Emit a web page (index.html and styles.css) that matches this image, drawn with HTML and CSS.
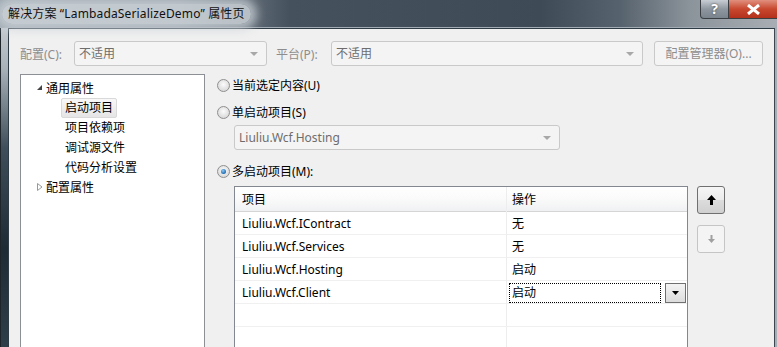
FILE: index.html
```html
<!DOCTYPE html>
<html lang="zh-CN">
<head>
  <meta charset="UTF-8">
  <title>解决方案 属性页</title>
  <link rel="stylesheet" href="styles.css">
</head>
<body>
  <div class="window">
    <div class="titlebar">
      <span class="title-glow">解决方案 “LambadaSerializeDemo” 属性页</span>
      <div class="caption-btns">
        <div class="cap-help">?</div>
        <div class="cap-close">
          <svg width="15" height="11" viewBox="0 0 15 11"><path d="M2 1 L13 10 M13 1 L2 10" stroke="#fff" stroke-width="3"/></svg>
        </div>
      </div>
    </div>

    <div class="frame">
      <div class="frame-left"></div>
      <div class="client">
        <div class="toolbar">
          <span class="lbl lbl-config">配置(C):</span>
          <div class="combo combo-config">不适用<span class="combo-arrow"></span></div>
          <span class="lbl lbl-platform">平台(P):</span>
          <div class="combo combo-platform">不适用<span class="combo-arrow"></span></div>
          <div class="btn-manager">配置管理器(O)...</div>
        </div>

        <div class="main">
          <div class="tree">
            <div class="tree-row">
              <svg class="twisty" width="6" height="6" viewBox="0 0 6 6"><path d="M5 0 L5 5 L0 5 Z" fill="#444"/></svg>
              <span>通用属性</span>
            </div>
            <div class="tree-row child"><span class="selected">启动项目</span></div>
            <div class="tree-row child"><span>项目依赖项</span></div>
            <div class="tree-row child"><span>调试源文件</span></div>
            <div class="tree-row child"><span>代码分析设置</span></div>
            <div class="tree-row last">
              <svg class="twisty" width="6" height="8" viewBox="0 0 6 8"><path d="M0.5 0.5 L5 4 L0.5 7.5 Z" fill="none" stroke="#999"/></svg>
              <span>配置属性</span>
            </div>
          </div>

          <div class="options">
            <div class="radio-row r1"><span class="radio"></span>当前选定内容(U)</div>
            <div class="radio-row r2"><span class="radio"></span>单启动项目(S)</div>
            <div class="combo combo-single">Liuliu.Wcf.Hosting<span class="combo-arrow"></span></div>
            <div class="radio-row r3"><span class="radio checked"></span>多启动项目(M):</div>

            <div class="multi">
              <div class="grid">
                <div class="grid-row head"><div class="cell">项目</div><div class="cell">操作</div></div>
                <div class="grid-row"><div class="cell">Liuliu.Wcf.IContract</div><div class="cell">无</div></div>
                <div class="grid-row"><div class="cell">Liuliu.Wcf.Services</div><div class="cell">无</div></div>
                <div class="grid-row"><div class="cell">Liuliu.Wcf.Hosting</div><div class="cell">启动</div></div>
                <div class="grid-row">
                  <div class="cell">Liuliu.Wcf.Client</div>
                  <div class="cell edit">
                    <div class="edit-box">启动</div>
                    <div class="edit-drop"><svg width="7" height="4" viewBox="0 0 7 4"><path d="M0 0 L7 0 L3.5 4 Z" fill="#000"/></svg></div>
                  </div>
                </div>
                <div class="grid-row"><div class="cell"></div><div class="cell"></div></div>
                <div class="grid-row"><div class="cell"></div><div class="cell"></div></div>
              </div>
              <div class="move-btns">
                <div class="move-btn">
                  <svg width="9" height="10" viewBox="0 0 9 10"><path d="M4.5 0 L9 5 L6 5 L6 10 L3 10 L3 5 L0 5 Z" fill="#000"/></svg>
                </div>
                <div class="move-btn disabled">
                  <svg width="7" height="8" viewBox="0 0 7 8"><path d="M2.5 0 L4.5 0 L4.5 4 L7 4 L3.5 8 L0 4 L2.5 4 Z" fill="#a0a0a0"/></svg>
                </div>
              </div>
            </div>
          </div>
        </div>
      </div>
      <div class="frame-right"></div>
    </div>
  </div>
</body>
</html>
```

FILE: styles.css
```css
body {
  margin: 0;
  width: 777px;
  height: 347px;
  overflow: hidden;
  font-family: "Noto Sans", "Noto Sans CJK SC", sans-serif;
  font-size: 12px;
  color: #000;
  background: #2a3640;
}

.window {
  display: flex;
  flex-direction: column;
  height: 347px;
}

.titlebar {
  height: 27px;
  display: flex;
  align-items: center;
  background: linear-gradient(to right, #9aa4ad 0, #8d97a0 180px, #45515d 290px, #3e4a56 540px, #56626d 620px, #8c949b 690px, #a8aeb3 777px);
  border-bottom: 1px solid #a3acb4;
  position: relative;
}

.title-glow {
  margin-left: 2px;
  padding: 0 6px;
  line-height: 20px;
  border-radius: 10px;
  background: rgba(206, 212, 218, 0.8);
  box-shadow: 0 0 10px 6px rgba(206, 212, 218, 0.75);
  white-space: nowrap;
  letter-spacing: 0.15px;
  color: #111;
}

.caption-btns {
  position: absolute;
  top: 0;
  left: 700px;
  display: flex;
}

.cap-help {
  width: 27px;
  height: 18px;
  border: 1px solid #3a3f44;
  border-top: none;
  border-bottom-left-radius: 4px;
  background: linear-gradient(#c8ced4, #8e979f 50%, #7a848d);
  color: #fff;
  font-weight: bold;
  font-size: 14px;
  line-height: 18px;
  text-align: center;
  text-shadow: 0 0 2px #333;
}

.cap-close {
  width: 49px;
  height: 18px;
  border: 1px solid #3a3f44;
  border-top: none;
  border-left: none;
  background: linear-gradient(#e0907e, #c8482f 50%, #b3301a);
  display: flex;
  align-items: center;
  justify-content: center;
}

.frame {
  flex: 1;
  display: flex;
  min-height: 0;
}

.frame-left {
  width: 7px;
  background: linear-gradient(#c3cad0 0, #a9b2b9 40px, #3e4e5a 120px, #1d2b35 220px, #2f3f4a 319px);
  border-left: 1px solid #1e262c;
}

.frame-right {
  width: 2px;
  background: #a6aeb4;
}

.client {
  flex: 1;
  background: #f0f0f0;
  border-top: 1px solid #2e3a44;
  border-left: 1px solid #2e3a44;
  border-right: 1px solid #3c4650;
  padding: 12px 0 0 11px;
  overflow: hidden;
}

.toolbar {
  display: flex;
  align-items: center;
  height: 25px;
}

.lbl {
  color: #8d8d8d;
}

.lbl-config {
  width: 54px;
}

.lbl-platform {
  margin-left: 9px;
  width: 55px;
}

.combo {
  position: relative;
  box-sizing: border-box;
  height: 25px;
  line-height: 23px;
  padding-left: 4px;
  border: 1px solid #c9c9c9;
  border-radius: 3px;
  background: #f4f4f4;
  color: #6d6d6d;
}

.combo-arrow {
  position: absolute;
  right: 8px;
  top: 10px;
  border-left: 4px solid transparent;
  border-right: 4px solid transparent;
  border-top: 4px solid #a8a8a8;
}

.combo-config {
  width: 193px;
}

.combo-platform {
  width: 312px;
}

.btn-manager {
  box-sizing: border-box;
  margin-left: 11px;
  width: 109px;
  height: 25px;
  line-height: 23px;
  text-align: center;
  border: 1px solid #c9c9c9;
  border-radius: 3px;
  background: #f4f4f4;
  color: #8d8d8d;
}

.main {
  display: flex;
  margin-top: 8px;
}

.tree {
  width: 183px;
  height: 300px;
  border: 1px solid #8c8f94;
  background: #fff;
  padding-top: 2px;
}

.tree-row {
  height: 20px;
  display: flex;
  align-items: center;
}

.tree-row:first-child {
  height: 21px;
}

.tree-row.last {
  margin-top: -1px;
}

.twisty {
  margin-left: 13px;
  width: 12px;
}

.tree-row.child span {
  margin-left: 40px;
  padding: 0 3px;
  line-height: 18px;
  border: 1px solid transparent;
}

.tree-row.child .selected {
  border-color: #d9d9d9;
  border-radius: 2px;
  background: linear-gradient(#f8f8f8, #e5e5e5);
}

.options {
  margin-left: 12px;
  flex: 1;
}

.radio-row {
  display: flex;
  align-items: center;
  height: 18px;
}

.radio-row.r1 {
  margin-top: 2px;
}

.radio-row.r2 {
  margin-top: 9px;
}

.radio-row.r3 {
  margin-top: 12px;
}

.radio {
  box-sizing: border-box;
  width: 13px;
  height: 13px;
  margin-right: 2px;
  border: 1px solid #8f8f8f;
  border-radius: 50%;
  background: radial-gradient(circle at 50% 40%, #fbfbfb 0, #dcdcdc 70%);
  display: flex;
  align-items: center;
  justify-content: center;
}

.radio.checked::after {
  content: "";
  width: 5px;
  height: 5px;
  border-radius: 50%;
  background: radial-gradient(circle at 40% 35%, #8cc8f4 0, #1c6bb4 70%);
}

.combo-single {
  margin: 4px 0 0 17px;
  width: 326px;
}

.multi {
  display: flex;
  margin: 6px 0 0 17px;
}

.grid {
  width: 452px;
  height: 170px;
  border: 1px solid #828790;
  border-bottom: none;
  background: #fff;
}

.grid-row {
  display: grid;
  grid-template-columns: 271px 1fr;
  height: 22px;
  border-bottom: 1px solid #f0f0f0;
}

.grid-row.head {
  height: 24px;
  background: linear-gradient(#fff 0, #fafafa 50%, #f0f1f3);
  border-bottom: 1px solid #d5d5d5;
}

.cell {
  padding-left: 7px;
  line-height: 23px;
  white-space: nowrap;
}

.cell + .cell {
  border-left: 1px solid #ededed;
  padding-left: 5px;
}

.grid-row.head .cell {
  line-height: 25px;
}

.cell.edit {
  display: flex;
  align-items: center;
  padding-left: 2px;
}

.edit-box {
  box-sizing: border-box;
  width: 152px;
  height: 20px;
  line-height: 18px;
  padding-left: 2px;
  border: 1px dotted #000;
}

.edit-drop {
  box-sizing: border-box;
  margin-left: 4px;
  width: 21px;
  height: 20px;
  border: 1px solid #707070;
  background: linear-gradient(#f4f4f4, #dcdcdc);
  display: flex;
  align-items: center;
  justify-content: center;
}

.move-btns {
  margin-left: 9px;
  display: flex;
  flex-direction: column;
  gap: 11px;
}

.move-btn {
  box-sizing: border-box;
  width: 28px;
  height: 28px;
  border: 1px solid #707070;
  border-radius: 3px;
  background: linear-gradient(#f6f6f6 0, #ebebeb 50%, #dcdcdc 51%, #d0d0d0);
  display: flex;
  align-items: center;
  justify-content: center;
}

.move-btn.disabled {
  border-color: #c5c5c5;
  background: #f4f4f4;
}
```
